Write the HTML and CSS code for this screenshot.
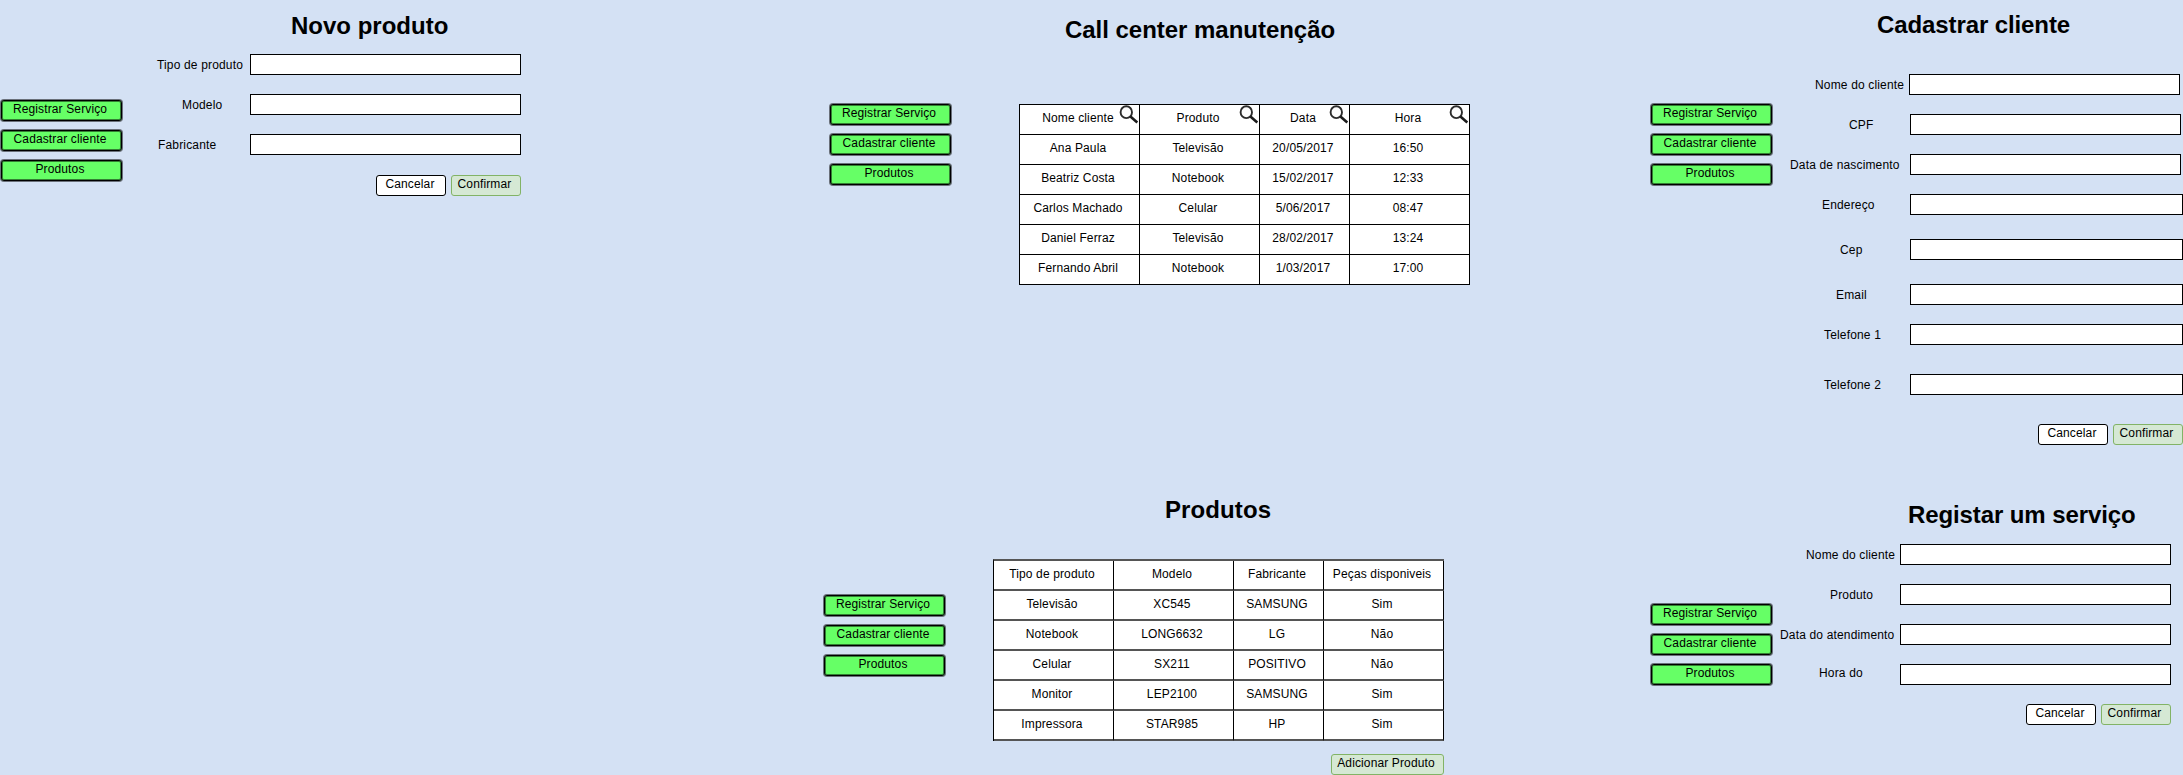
FILE: index.html
```html
<!DOCTYPE html>
<html lang="pt-BR">
<head>
<meta charset="utf-8">
<title>Call center manutenção</title>
<link rel="stylesheet" href="styles.css">
</head>
<body>
<svg class="defs" width="0" height="0"><symbol id="search" viewBox="0 0 20 19"><ellipse cx="7.3" cy="7.2" rx="5.7" ry="5.9" fill="#fdfdfd" stroke="#2b2b2b" stroke-width="1.9"/><path d="M11.4 11.6 L18.3 17.6" stroke="#1c1c1c" stroke-width="2.6" fill="none"/></symbol></svg>
<main class="board">
  <div class="col col-left">
    <section class="screen novo">
      <nav class="menu"><a>Registrar Serviço</a><a>Cadastrar cliente</a><a>Produtos</a></nav>
      <div class="content">
        <h1>Novo produto</h1>
        <form class="form">
          <div class="row"><label>Tipo de produto</label><span class="input"></span></div>
          <div class="row"><label class="l-modelo">Modelo</label><span class="input"></span></div>
          <div class="row"><label class="l-fabricante">Fabricante</label><span class="input"></span></div>
        </form>
        <div class="actions"><span class="btn">Cancelar</span><span class="btn ok">Confirmar</span></div>
      </div>
    </section>
  </div>
  <div class="col col-mid">
    <section class="screen call">
      <nav class="menu narrow"><a>Registrar Serviço</a><a>Cadastrar cliente</a><a>Produtos</a></nav>
      <div class="content">
        <h1>Call center manutenção</h1>
        <div class="table">
          <div class="cell">Nome cliente<svg class="icon"><use href="#search"/></svg></div><div class="cell">Produto<svg class="icon"><use href="#search"/></svg></div><div class="cell">Data<svg class="icon"><use href="#search"/></svg></div><div class="cell">Hora<svg class="icon"><use href="#search"/></svg></div>
          <div class="cell">Ana Paula</div><div class="cell">Televisão</div><div class="cell">20/05/2017</div><div class="cell">16:50</div>
          <div class="cell">Beatriz Costa</div><div class="cell">Notebook</div><div class="cell">15/02/2017</div><div class="cell">12:33</div>
          <div class="cell">Carlos Machado</div><div class="cell">Celular</div><div class="cell">5/06/2017</div><div class="cell">08:47</div>
          <div class="cell">Daniel Ferraz</div><div class="cell">Televisão</div><div class="cell">28/02/2017</div><div class="cell">13:24</div>
          <div class="cell">Fernando Abril</div><div class="cell">Notebook</div><div class="cell">1/03/2017</div><div class="cell">17:00</div>
        </div>
      </div>
    </section>
    <section class="screen produtos">
      <nav class="menu narrow"><a>Registrar Serviço</a><a>Cadastrar cliente</a><a>Produtos</a></nav>
      <div class="content">
        <h1>Produtos</h1>
        <div class="table soft">
          <div class="cell">Tipo de produto</div><div class="cell">Modelo</div><div class="cell">Fabricante</div><div class="cell">Peças disponiveis</div>
          <div class="cell">Televisão</div><div class="cell">XC545</div><div class="cell">SAMSUNG</div><div class="cell">Sim</div>
          <div class="cell">Notebook</div><div class="cell">LONG6632</div><div class="cell">LG</div><div class="cell">Não</div>
          <div class="cell">Celular</div><div class="cell">SX211</div><div class="cell">POSITIVO</div><div class="cell">Não</div>
          <div class="cell">Monitor</div><div class="cell">LEP2100</div><div class="cell">SAMSUNG</div><div class="cell">Sim</div>
          <div class="cell">Impressora</div><div class="cell">STAR985</div><div class="cell">HP</div><div class="cell">Sim</div>
        </div>
        <div class="actions"><span class="btn ok wide">Adicionar Produto</span></div>
      </div>
    </section>
  </div>
  <div class="col col-right">
    <section class="screen cadastrar">
      <nav class="menu"><a>Registrar Serviço</a><a>Cadastrar cliente</a><a>Produtos</a></nav>
      <div class="content">
        <h1>Cadastrar cliente</h1>
        <form class="form">
          <div class="row first"><label class="l-nome">Nome do cliente</label><span class="input"></span></div>
          <div class="row"><label class="l-cpf">CPF</label><span class="input"></span></div>
          <div class="row"><label class="l-nasc">Data de nascimento</label><span class="input"></span></div>
          <div class="row full"><label class="l-end">Endereço</label><span class="input"></span></div>
          <div class="row full cep"><label class="l-cep">Cep</label><span class="input"></span></div>
          <div class="row full email"><label class="l-email">Email</label><span class="input"></span></div>
          <div class="row full"><label class="l-tel">Telefone 1</label><span class="input"></span></div>
          <div class="row full tel2"><label class="l-tel">Telefone 2</label><span class="input"></span></div>
        </form>
        <div class="actions"><span class="btn">Cancelar</span><span class="btn ok">Confirmar</span></div>
      </div>
    </section>
    <section class="screen registrar">
      <nav class="menu"><a>Registrar Serviço</a><a>Cadastrar cliente</a><a>Produtos</a></nav>
      <div class="content">
        <h1>Registar um serviço</h1>
        <form class="form">
          <div class="row"><label class="l-nome">Nome do cliente</label><span class="input"></span></div>
          <div class="row"><label class="l-prod">Produto</label><span class="input"></span></div>
          <div class="row"><label class="l-atend">Data do atendimento</label><span class="input"></span></div>
          <div class="row"><label class="l-hora">Hora do</label><span class="input"></span></div>
        </form>
        <div class="actions"><span class="btn">Cancelar</span><span class="btn ok">Confirmar</span></div>
      </div>
    </section>
  </div>
</main>
</body>
</html>
```

FILE: styles.css
```css
* { box-sizing: border-box; }
body {
  margin: 0;
  background: #d4e1f4;
  color: #000;
  font: 12px/14px "Liberation Sans", Arial, sans-serif;
  letter-spacing: .13px;
}
.defs { display: block; height: 0; }
.board { display: grid; grid-template-columns: 823px 827px 533px; height: 775px; overflow: hidden; }
.screen { display: flex; align-items: flex-start; }
.col-mid .screen, .col-right .screen { height: 480px; }
.content { flex: 1; min-width: 0; }
h1 { margin: 0; font-size: 24px; line-height: 28px; letter-spacing: 0; white-space: nowrap; }

/* Side menu */
.menu { display: flex; flex-direction: column; gap: 9px; width: 121px; margin-left: 1px; flex: none; }
.menu a {
  height: 21px;
  padding: 1px 3px 0 0;
  border: 1px solid #000;
  border-radius: 3px;
  background: #66ff66;
  box-shadow: 0 0 0 1px rgba(0, 0, 0, .5), inset 0 0 0 1px rgba(0, 0, 0, .5);
  text-align: center;
}

/* Forms */
.row { display: flex; height: 21px; margin-bottom: 19px; }
.row label { flex: none; width: 120px; padding-top: 4px; white-space: nowrap; letter-spacing: .16px; }
.row .input { flex: none; width: 271px; border: 1px solid #000; background: #fff; }
.actions { display: flex; justify-content: flex-end; gap: 5px; }
.btn {
  width: 70px;
  height: 21px;
  padding: 1px 2px 0 0;
  border: 1px solid #000;
  border-radius: 3px;
  background: #fff;
  text-align: center;
  white-space: nowrap;
}
.btn.ok { padding-right: 3px; background: #d5e8d4; border-color: #82b366; }
.btn.wide { width: 113px; }

/* Tables */
.table {
  display: grid;
  grid-template-columns: 120px 120px 90px 120px;
  grid-auto-rows: 30px;
  width: 451px;
  border: solid #000;
  border-width: 1px 0 0 1px;
  background: #fff;
}
.cell {
  position: relative;
  padding: 6px 3px 0 0;
  border: solid #000;
  border-width: 0 1px 1px 0;
  text-align: center;
}
.icon { position: absolute; top: 0; right: 0; width: 20px; height: 19px; }
.table.soft .cell { border-bottom: 2px solid #555; }
.table.soft { border-top: 2px solid #555; }

/* Novo produto */
.novo .menu { margin-top: 100px; }
.novo .content { flex: none; width: 399px; padding: 12px 0 0 35px; }
.novo h1 { padding-left: 134px; }
.novo .form { padding-top: 14px; }
.novo label { width: 93px; }
.novo .l-modelo { padding-left: 25px; }
.novo .l-fabricante { padding-left: 1px; }
.novo .actions { margin-top: 20px; }

/* Call center */
.call .menu { margin: 104px 0 0 7px; }
.call .content { padding: 16px 0 0 68px; }
.call h1 { padding-left: 46px; letter-spacing: -.03px; }
.call .table { margin-top: 60px; }

/* Produtos */
.produtos .menu { margin-top: 115px; }
.produtos .content { padding: 16px 0 0 48px; }
.produtos h1 { padding-left: 172px; letter-spacing: .1px; }
.produtos .table { margin-top: 35px; }
.produtos .actions { width: 451px; margin-top: 13px; }

/* Cadastrar cliente */
.cadastrar .menu { margin-top: 104px; }
.cadastrar .content { padding: 11px 0 0 18px; }
.cadastrar h1 { padding-left: 87px; letter-spacing: -.1px; }
.cadastrar .form { padding-top: 35px; }
.cadastrar .first label { width: 119px; }
.cadastrar .full .input { width: 273px; }
.cadastrar .cep { margin: 24px 0; }
.cadastrar .tel2 { margin-top: 29px; }
.cadastrar .actions { margin-top: 29px; }
.cadastrar .l-nome { padding-left: 25px; }
.cadastrar .l-cpf { padding-left: 59px; }
.cadastrar .l-nasc { padding-left: 0; }
.cadastrar .l-end { padding-left: 32px; }
.cadastrar .l-cep { padding-left: 50px; }
.cadastrar .l-email { padding-left: 46px; }
.cadastrar .l-tel { padding-left: 34px; }

/* Registrar um serviço */
.registrar .menu { margin-top: 124px; }
.registrar .content { flex: none; width: 399px; padding: 21px 0 0 8px; }
.registrar h1 { padding-left: 128px; letter-spacing: -.1px; }
.registrar .form { padding-top: 15px; }
.registrar .actions { margin-top: 0; }
.registrar .l-nome { padding-left: 26px; }
.registrar .l-prod { padding-left: 50px; }
.registrar .l-atend { padding-left: 0; }
.registrar .l-hora { padding: 2px 0 0 39px; }
```
